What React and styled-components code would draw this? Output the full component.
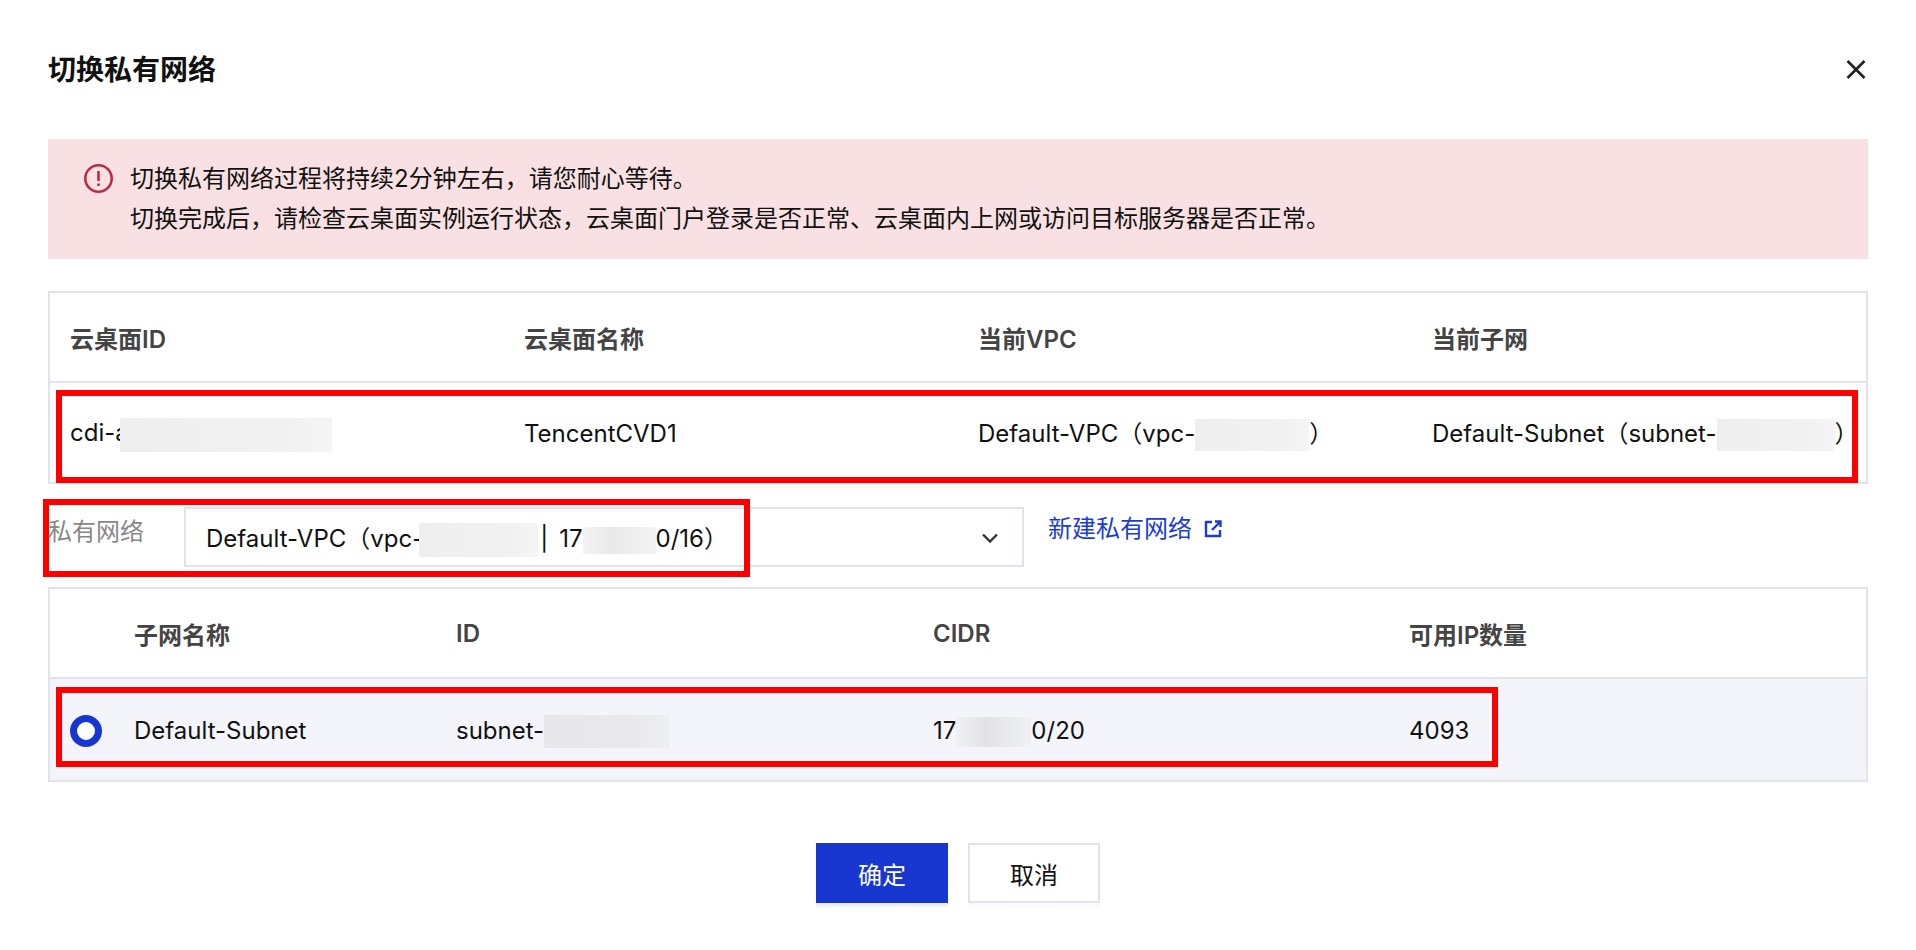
import styled, { createGlobalStyle } from 'styled-components'

const GlobalStyle = createGlobalStyle`
  html, body {
    margin: 0;
    padding: 0;
    background: #fff;
  }
  body {
    font-family: Inter, "Noto Sans CJK SC", sans-serif;
    color: #111;
  }
  * {
    box-sizing: border-box;
  }
`

const Page = styled.div`
  position: relative;
  width: 1916px;
  height: 950px;
  padding: 0 48px;
  overflow: hidden;
`

const Header = styled.div`
  height: 139px;
  padding-top: 51px;
  display: flex;
  justify-content: space-between;
  align-items: flex-start;
`

const Title = styled.div`
  font-size: 28px;
  line-height: 38px;
  font-weight: 700;
  color: #111;
`

const CloseBtn = styled.div`
  width: 20px;
  height: 19px;
  margin: 9px 2px 0 0;
  display: flex;
  & svg {
    display: block;
  }
`

const Alert = styled.div`
  height: 120px;
  padding: 20px 36px;
  background: #f9e1e3;
  display: flex;
  gap: 17px;
  font-size: 24px;
  line-height: 40px;
  color: #111;
  & svg {
    flex: none;
    margin-top: 5px;
  }
`

const Table = styled.div`
  margin-top: ${({ $top }) => $top}px;
  border: 2px solid #e1e4ef;
`

const Row = styled.div`
  display: grid;
  grid-template-columns: ${({ $cols }) => $cols};
  align-items: center;
  height: ${({ $height }) => $height}px;
  font-size: 24px;
  color: #111;
  background: ${({ $active }) => ($active ? '#f4f5fa' : '#fff')};
  padding-top: ${({ $active, $body }) => ($active || $body ? '3px' : '0')};
  border-bottom: ${({ $line }) => ($line ? '2px solid #e1e4ef' : 'none')};
`

const HeadCell = styled.div`
  padding-left: ${({ $flush }) => ($flush ? '0' : '20px')};
  font-weight: 600;
  color: #444;
  white-space: nowrap;
`

const Cell = styled.div`
  padding-left: ${({ $flush }) => ($flush ? '0' : '20px')};
  white-space: nowrap;
  line-height: 34px;
`

const Mask = styled.span`
  display: inline-block;
  vertical-align: middle;
  width: ${({ $w }) => $w}px;
  height: ${({ $h }) => $h}px;
  margin-left: ${({ $ml }) => $ml || 0}px;
  background: ${({ $c }) => $c || 'linear-gradient(90deg, #efefef, #f0f0f0 70%, #f5f5f5)'};
`

const SelectRow = styled.div`
  margin-top: 23px;
  display: flex;
  align-items: flex-start;
`

const SelectLabel = styled.div`
  width: 136px;
  font-size: 24px;
  line-height: 34px;
  padding-top: 8px;
  color: #888;
`

const Select = styled.div`
  width: 840px;
  height: 60px;
  padding: 2px 24px 0 20px;
  border: 2px solid #e1e4ef;
  display: flex;
  align-items: center;
  justify-content: space-between;
  font-size: 24px;
  color: #111;
  white-space: nowrap;
`

const Sep = styled.span`
  margin: 0 11px 0 2px;
`

const NewLink = styled.a`
  margin-left: 24px;
  padding-top: 5px;
  display: flex;
  align-items: center;
  gap: 12px;
  font-size: 24px;
  line-height: 34px;
  color: #1a3bd4;
  text-decoration: none;
`

const RadioDot = styled.span`
  display: block;
  width: 32px;
  height: 32px;
  margin-left: 20px;
  border-radius: 50%;
  border: 7px solid #1836d0;
  background: #fff;
`

const Footer = styled.div`
  margin-top: 61px;
  display: flex;
  justify-content: center;
  gap: 20px;
`

const Btn = styled.div`
  width: 132px;
  height: 60px;
  display: flex;
  align-items: center;
  justify-content: center;
  font-size: 24px;
  background: ${({ $primary }) => ($primary ? '#1836d0' : '#fff')};
  color: ${({ $primary }) => ($primary ? '#fff' : '#111')};
  border: 2px solid ${({ $primary }) => ($primary ? '#1836d0' : '#e1e4ef')};
  box-shadow: 0 4px 0 ${({ $primary }) => ($primary ? '#eff2fc' : '#fafbfc')};
`

// red annotation frames drawn on top of the screenshot
const Mark = styled.div`
  position: absolute;
  left: ${({ $x }) => $x}px;
  top: ${({ $y }) => $y}px;
  width: ${({ $w }) => $w}px;
  height: ${({ $h }) => $h}px;
  border: 6px solid #f00;
  pointer-events: none;
`

const vpcCols = 'repeat(4, 1fr)'
const subnetCols = '84px 322px 477px 476px 1fr'

const App = () => {
  return (
    <Page>
      <GlobalStyle />
      <Header>
        <Title>切换私有网络</Title>
        <CloseBtn>
          <svg width="20" height="19" viewBox="0 0 20 19" fill="none">
            <path d="M1.5 1L18.5 18M18.5 1L1.5 18" stroke="#222" strokeWidth="2.6" />
          </svg>
        </CloseBtn>
      </Header>

      <Alert>
        <svg width="29" height="29" viewBox="0 0 29 29" fill="none">
          <circle cx="14.5" cy="14.5" r="13.2" stroke="#b92d46" strokeWidth="2.6" />
          <path d="M14.5 7V17M14.5 19.5V22" stroke="#b92d46" strokeWidth="2.6" />
        </svg>
        <div>
          <div>切换私有网络过程将持续2分钟左右，请您耐心等待。</div>
          <div>切换完成后，请检查云桌面实例运行状态，云桌面门户登录是否正常、云桌面内上网或访问目标服务器是否正常。</div>
        </div>
      </Alert>

      <Table $top={32}>
        <Row $cols={vpcCols} $height={90} $line>
          <HeadCell>云桌面ID</HeadCell>
          <HeadCell>云桌面名称</HeadCell>
          <HeadCell>当前VPC</HeadCell>
          <HeadCell>当前子网</HeadCell>
        </Row>
        <Row $cols={vpcCols} $height={99} $body>
          <Cell>cdi-a<Mask $w={212} $h={34} $ml={-9} /></Cell>
          <Cell>TencentCVD1</Cell>
          <Cell>Default-VPC（vpc-<Mask $w={114} $h={32} />）</Cell>
          <Cell>Default-Subnet（subnet-<Mask $w={118} $h={32} />）</Cell>
        </Row>
      </Table>

      <SelectRow>
        <SelectLabel>私有网络</SelectLabel>
        <Select>
          <span>
            Default-VPC（vpc-<Mask $w={119} $h={34} $ml={-4} /><Sep>|</Sep>17<Mask $w={73} $h={27} $c="linear-gradient(90deg, #f3f3f3, #e9e9e9 40%, #f3f3f3)" />0/16）
          </span>
          <svg width="16" height="10" viewBox="0 0 16 10" fill="none">
            <path d="M1 1.5L8 8.5L15 1.5" stroke="#333" strokeWidth="2.4" />
          </svg>
        </Select>
        <NewLink href="#">
          新建私有网络
          <svg width="18" height="18" viewBox="0 0 18 18" fill="none">
            <path d="M8 2H2V16H16V10" stroke="#1a3bd4" strokeWidth="2.4" />
            <path d="M11 1.5H16.5V7M16.5 1.5L8 10" stroke="#1a3bd4" strokeWidth="2.4" />
          </svg>
        </NewLink>
      </SelectRow>

      <Table $top={20}>
        <Row $cols={subnetCols} $height={90} $line>
          <span />
          <HeadCell $flush>子网名称</HeadCell>
          <HeadCell $flush>ID</HeadCell>
          <HeadCell $flush>CIDR</HeadCell>
          <HeadCell $flush>可用IP数量</HeadCell>
        </Row>
        <Row $cols={subnetCols} $height={101} $active>
          <RadioDot />
          <Cell $flush>Default-Subnet</Cell>
          <Cell $flush>subnet-<Mask $w={126} $h={33} $c="linear-gradient(90deg, #e8e8ec, #e9e9ed 70%, #eeeff3)" /></Cell>
          <Cell $flush>17<Mask $w={75} $h={30} $c="linear-gradient(90deg, #f0f1f5, #e3e3e6 40%, #f0f1f5)" />0/20</Cell>
          <Cell $flush>4093</Cell>
        </Row>
      </Table>

      <Footer>
        <Btn $primary>确定</Btn>
        <Btn>取消</Btn>
      </Footer>

      <Mark $x={56} $y={390} $w={1802} $h={93} />
      <Mark $x={43} $y={499} $w={707} $h={78} />
      <Mark $x={56} $y={687} $w={1442} $h={80} />
    </Page>
  )
}

export default App
